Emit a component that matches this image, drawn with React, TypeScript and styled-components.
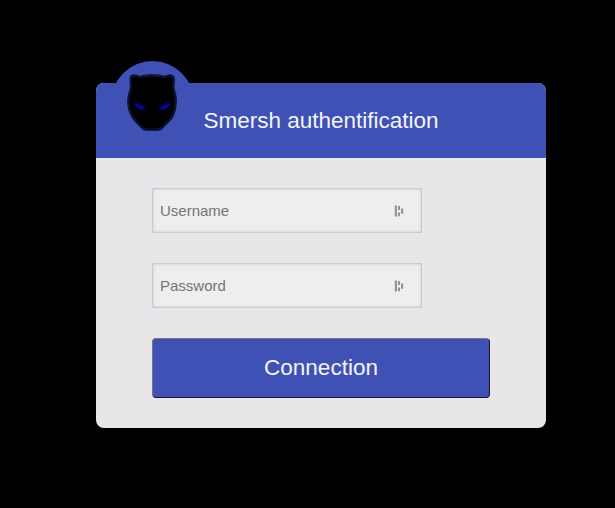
import React from "react";
import styled, { createGlobalStyle } from "styled-components";

const GlobalStyle = createGlobalStyle`
  * { box-sizing: border-box; }
  body { margin: 0; background: #000; font-family: "Liberation Sans", Arial, sans-serif; }
`;

const Page = styled.main`
  display: flex;
  height: 508px;
  padding: 83px 0 0 96px;
  align-items: flex-start;
  overflow: hidden;
`;

const Card = styled.section`
  position: relative;
  width: 450px;
  height: 345px;
  border-radius: 8px;
  background: #e8e6e9;
`;

const Header = styled.header`
  display: flex;
  align-items: center;
  height: 75px;
  padding-left: 107.5px;
  border-radius: 8px 8px 0 0;
  background: #3f51b5;
`;

const Title = styled.h1`
  margin: 0;
  font-size: 22.5px;
  font-weight: 400;
  line-height: 26px;
  color: #f4f4f8;
  white-space: nowrap;
`;

const Avatar = styled.div`
  position: absolute;
  top: -22px;
  left: 15px;
  width: 83px;
  height: 83px;
  border-radius: 50%;
  background: #3f51b5;

  svg { display: block; width: 83px; height: 83px; }
`;

const Form = styled.form`
  display: flex;
  flex-direction: column;
  gap: 30px;
  padding: 30px 56px;
`;

const Field = styled.label`
  display: flex;
  align-items: center;
  width: 270px;
  height: 45px;
  padding-right: 17px;
  background: #eee;
  border: 1px solid #d0c8d2;
  box-shadow: inset 0 0 3px #c9c0cc;

  svg { flex: none; width: 10px; height: 12px; }
`;

const Input = styled.input`
  flex: 1;
  min-width: 0;
  height: 100%;
  padding: 0 7px;
  border: 0;
  outline: 0;
  background: transparent;
  font: 15px "Liberation Sans", Arial, sans-serif;
  color: #333;

  &::placeholder { color: #757575; opacity: 1; }
`;

const Submit = styled.button`
  width: 338px;
  height: 60px;
  padding: 0 0 1px;
  border: 1px solid;
  border-color: #767676 #15182b #15182b #767676;
  border-radius: 4px;
  background: #3f51b5;
  font: 22.5px "Liberation Sans", Arial, sans-serif;
  color: #f4f4f8;
`;

const headPath =
  "M120 84 Q120 76 128 75 Q138 73 148 79 Q165 74 187 74 Q207 74 225 79 Q235 73 245 75 Q253 76 253 86 L252 110 Q253 119 256 128 Q260 143 259 158 Q258 184 249 200 Q243 211 234 219 L216 237 Q211 241 203 241 L170 241 Q162 241 157 237 L139 219 Q130 210 124 199 Q114 181 113 158 Q112 143 117 128 Q121 118 121 109 Z";

const PantherIcon = () => (
  <svg viewBox="63 33 249 249" aria-hidden="true">
    <defs>
      <filter id="eyeGlow" x="-50%" y="-80%" width="200%" height="260%">
        <feGaussianBlur stdDeviation="2.5" />
      </filter>
      <filter id="edgeGlow">
        <feGaussianBlur stdDeviation="2" />
      </filter>
    </defs>
    <path d={headPath} fill="#0c1234" stroke="#0c1234" strokeWidth="3" strokeLinejoin="round" filter="url(#edgeGlow)" />
    <path d={headPath} fill="#000" transform="translate(13 11) scale(.93)" filter="url(#edgeGlow)" />
    <g fill="#05075c" stroke="#05075c" strokeWidth="9" strokeLinejoin="round" filter="url(#eyeGlow)" opacity=".7">
      <path d="M133 160 Q151 163 164 176 Q143 180 133 160Z" />
      <path d="M241 160 Q222 163 209 176 Q230 180 241 160Z" />
    </g>
    <g fill="#0508a8" stroke="#020230" strokeWidth="2">
      <path d="M132 159 Q154 162 165 177 Q141 182 132 159Z" />
      <path d="M242 159 Q219 162 208 177 Q232 182 242 159Z" />
    </g>
  </svg>
);

const ManagerIcon = () => (
  <svg viewBox="0 0 10 12" fill="#949494" aria-hidden="true">
    <path d="M.8.5H3v11H.8zM4 1h2v4H4zM4 7.5h2v3.7H4zM7 3.5h2.2v5.2H7z" />
  </svg>
);

export default function App() {
  return (
    <>
      <GlobalStyle />
      <Page>
        <Card>
          <Header>
            <Avatar><PantherIcon /></Avatar>
            <Title>Smersh authentification</Title>
          </Header>
          <Form onSubmit={(event) => event.preventDefault()}>
            <Field><Input placeholder="Username" aria-label="Username" /><ManagerIcon /></Field>
            <Field><Input type="password" placeholder="Password" aria-label="Password" /><ManagerIcon /></Field>
            <Submit type="submit">Connection</Submit>
          </Form>
        </Card>
      </Page>
    </>
  );
}
